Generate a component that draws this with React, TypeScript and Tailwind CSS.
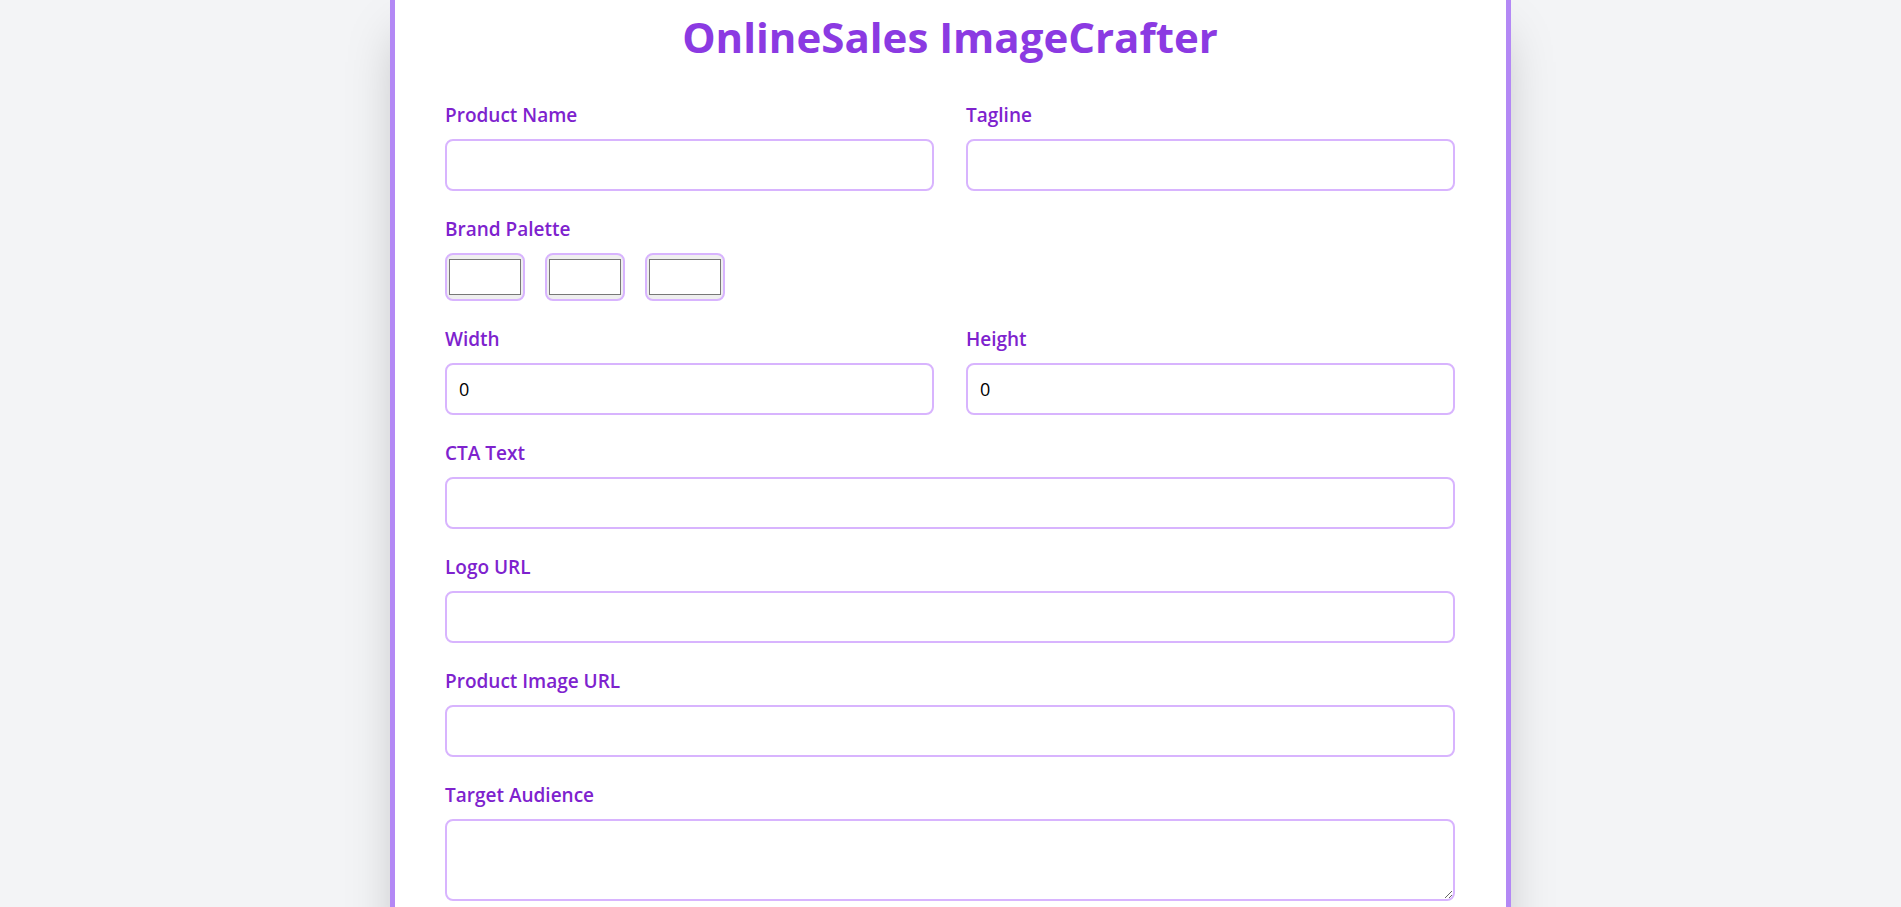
import React from "react";

function Field({ label, children }: { label: string; children: React.ReactNode }) {
  return (
    <div className="flex flex-col">
      <label className="block mb-2.5 text-[19px] leading-7 font-semibold text-[#7e22ce]">{label}</label>
      {children}
    </div>
  );
}

const inputCls =
  "w-full h-[52px] px-3 text-lg leading-7 text-black bg-white border-2 border-[#d8b4fe] rounded-lg outline-none";

export default function App() {
  return (
    <div className="min-h-screen bg-[#f3f4f6] font-['Open_Sans',sans-serif]">
      <div className="mx-auto w-[1121px] bg-white border-x-[5px] border-[#b388f5] shadow-2xl pl-[50px] pr-[51px] pt-[9px] pb-12">
        <h1 className="text-center text-[42px] leading-[56px] font-bold text-[#8b3ae2] mb-[36px]">
          OnlineSales ImageCrafter
        </h1>
        <div className="flex flex-col gap-6">
          <div className="grid grid-cols-2 gap-8">
            <Field label="Product Name">
              <input type="text" className={inputCls} />
            </Field>
            <Field label="Tagline">
              <input type="text" className={inputCls} />
            </Field>
          </div>
          <Field label="Brand Palette">
            <div className="flex gap-5">
              <input type="color" defaultValue="#ffffff" className="w-20 h-12 border-2 border-[#d8b4fe] rounded-lg bg-[#efefef]" />
              <input type="color" defaultValue="#ffffff" className="w-20 h-12 border-2 border-[#d8b4fe] rounded-lg bg-[#efefef]" />
              <input type="color" defaultValue="#ffffff" className="w-20 h-12 border-2 border-[#d8b4fe] rounded-lg bg-[#efefef]" />
            </div>
          </Field>
          <div className="grid grid-cols-2 gap-8">
            <Field label="Width">
              <input type="number" defaultValue={0} className={inputCls} />
            </Field>
            <Field label="Height">
              <input type="number" defaultValue={0} className={inputCls} />
            </Field>
          </div>
          <Field label="CTA Text">
            <input type="text" className={inputCls} />
          </Field>
          <Field label="Logo URL">
            <input type="text" className={inputCls} />
          </Field>
          <Field label="Product Image URL">
            <input type="text" className={inputCls} />
          </Field>
          <Field label="Target Audience">
            <textarea className="w-full h-[82px] px-3 py-2.5 text-lg leading-7 text-black bg-white border-2 border-[#d8b4fe] rounded-lg outline-none" />
          </Field>
        </div>
      </div>
    </div>
  );
}
